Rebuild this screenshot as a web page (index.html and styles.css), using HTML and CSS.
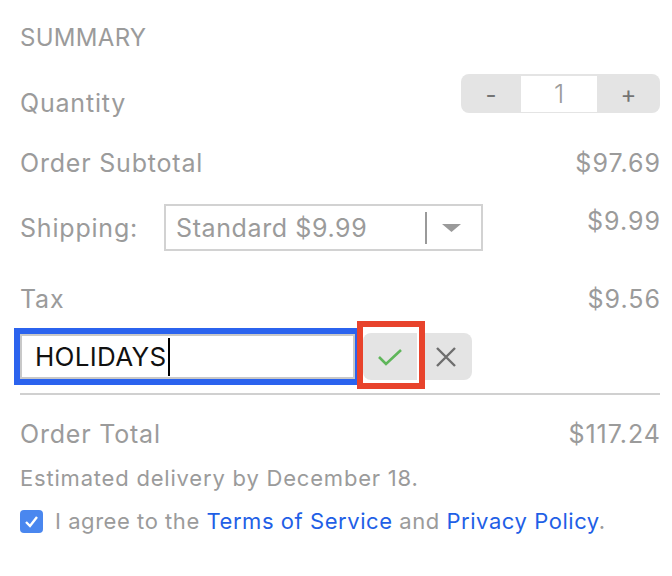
FILE: index.html
```html
<!DOCTYPE html>
<html lang="en">

<head>
    <meta charset="UTF-8">
    <meta name="viewport" content="width=device-width, initial-scale=1.0">
    <title>Summary</title>
    <link rel="stylesheet" href="styles.css">
</head>

<body>
    <div class="summary">
        <div class="title">SUMMARY</div>

        <div class="row qty-row">
            <span class="label">Quantity</span>
            <div class="stepper">
                <button class="step">-</button>
                <span class="count">1</span>
                <button class="step">+</button>
            </div>
        </div>

        <div class="row subtotal-row">
            <span class="label">Order Subtotal</span>
            <span class="value">$97.69</span>
        </div>

        <div class="row ship-row">
            <div class="ship-left">
                <span class="label">Shipping:</span>
                <div class="select">
                    <span class="select-text">Standard $9.99</span>
                    <span class="select-sep"></span>
                    <svg class="select-arrow" width="19" height="8" viewBox="0 0 19 8">
                        <polygon points="0,0 19,0 9.5,8" fill="#9a9a9a" />
                    </svg>
                </div>
            </div>
            <span class="value">$9.99</span>
        </div>

        <div class="row tax-row">
            <span class="label">Tax</span>
            <span class="value">$9.56</span>
        </div>

        <div class="coupon-row">
            <div class="coupon-input">HOLIDAYS<span class="caret"></span></div>
            <div class="coupon-buttons">
                <button class="apply">
                    <svg width="26" height="18" viewBox="0 0 26 18">
                        <polyline points="2,9 9,16 24,2" fill="none" stroke="#5fb65a" stroke-width="2.6" />
                    </svg>
                    <span class="highlight"></span>
                </button>
                <button class="cancel">
                    <svg width="22" height="22" viewBox="0 0 22 22">
                        <path d="M2 2 L20 20 M20 2 L2 20" stroke="#6e6e6e" stroke-width="2.4" />
                    </svg>
                </button>
            </div>
        </div>

        <div class="divider"></div>

        <div class="row total-row">
            <span class="label">Order Total</span>
            <span class="value">$117.24</span>
        </div>

        <p class="note">Estimated delivery by December 18.</p>

        <label class="agree">
            <span class="checkbox">
                <svg width="15" height="13" viewBox="0 0 15 13">
                    <polyline points="2,7 6,11 13,2" fill="none" stroke="#fff" stroke-width="2.4" />
                </svg>
            </span>
            <span>I agree to the <a href="#">Terms of Service</a> and <a href="#">Privacy Policy</a>.</span>
        </label>
    </div>
</body>

</html>
```

FILE: styles.css
```css
* {
    box-sizing: border-box;
}

body {
    margin: 0;
    background: #fff;
    font-family: Inter, "Noto Sans", sans-serif;
    color: #9b9b9b;
}

.summary {
    width: 640px;
    margin-left: 20px;
    padding-top: 23px;
}

.title {
    font-size: 24px;
    line-height: 30px;
    letter-spacing: 0.3px;
}

.row {
    display: flex;
    justify-content: space-between;
    align-items: flex-start;
}

.label,
.value {
    font-size: 25px;
    line-height: 30px;
    letter-spacing: 0.8px;
}

.value {
    letter-spacing: 1px;
    margin-right: -1px;
}

.qty-row {
    margin-top: 21px;
}

.qty-row .label {
    padding-top: 14px;
}

.stepper {
    display: flex;
    width: 199px;
    height: 39px;
    background: #e4e4e4;
    border-radius: 8px;
    padding: 2px 0 1px;
}

.step {
    width: 60px;
    border: none;
    background: none;
    font-family: inherit;
    font-size: 24px;
    color: #747474;
    padding: 0;
}

.step:last-child {
    width: 63px;
}

.count {
    width: 76px;
    background: #fff;
    text-align: center;
    font-size: 26px;
    font-weight: 300;
    line-height: 36px;
    color: #9b9b9b;
}

.subtotal-row {
    margin-top: 30px;
}

.ship-row {
    margin-top: 26px;
}

.ship-left {
    display: flex;
    align-items: flex-start;
    gap: 26px;
}

.ship-left .label {
    padding-top: 9px;
}

.ship-row .value {
    padding-top: 2px;
}

.select {
    width: 319px;
    height: 47px;
    border: 2px solid #d2d2d2;
    display: flex;
    align-items: center;
    padding-left: 10px;
}

.select-text {
    font-size: 25px;
    letter-spacing: 0.6px;
    width: 249px;
}

.select-sep {
    width: 2px;
    height: 32px;
    background: #9a9a9a;
}

.select-arrow {
    margin-left: 15px;
}

.tax-row {
    margin-top: 33px;
}

.coupon-row {
    display: flex;
    align-items: center;
    margin-top: 19px;
}

.coupon-input {
    width: 335px;
    height: 45px;
    border: 2px solid #c8c8c8;
    box-shadow: 0 0 0 6px #2b63ee;
    color: #111;
    font-size: 26px;
    letter-spacing: 0.3px;
    line-height: 41px;
    padding-left: 13px;
    display: flex;
    align-items: center;
}

.caret {
    width: 2px;
    height: 38px;
    background: #000;
    margin-left: 1px;
}

.coupon-buttons {
    display: flex;
    margin-left: 8px;
}

.apply,
.cancel {
    height: 47px;
    border: none;
    background: #e4e4e4;
    display: flex;
    align-items: center;
    justify-content: center;
    padding: 0;
}

.apply {
    position: relative;
    width: 56px;
    border-right: 2px solid #fff;
    border-radius: 8px 0 0 8px;
}

.cancel {
    width: 53px;
    border-radius: 0 8px 8px 0;
}

.highlight {
    position: absolute;
    left: -6px;
    right: -8px;
    top: -12px;
    bottom: -9px;
    border: 6px solid #e8432c;
}

.divider {
    height: 2px;
    background: #d0d0d0;
    margin-top: 13px;
}

.total-row {
    margin-top: 24px;
}

.note {
    margin: 15px 0 0;
    font-size: 22px;
    letter-spacing: 0.8px;
    line-height: 28px;
}

.agree {
    display: flex;
    align-items: center;
    gap: 12px;
    margin-top: 15px;
    font-size: 22px;
    letter-spacing: 0.55px;
    line-height: 28px;
}

.checkbox {
    width: 23px;
    height: 23px;
    background: #4a87ef;
    border-radius: 4px;
    display: flex;
    align-items: center;
    justify-content: center;
}

.agree a {
    color: #1f5fe6;
    text-decoration: none;
}
```
